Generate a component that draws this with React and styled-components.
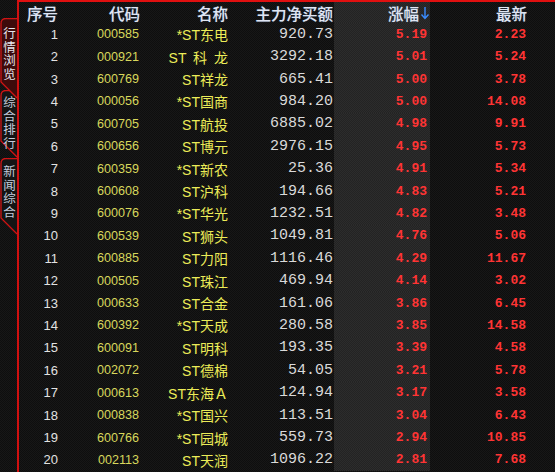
import React from "react";
import styled, { createGlobalStyle } from "styled-components";

const GlobalStyle = createGlobalStyle`
  html, body {
    margin: 0;
    padding: 0;
    background: #121212;
  }
  body {
    font-family: "Liberation Sans", "Noto Sans CJK SC", sans-serif;
  }
`;

const dots = (a, b) => `repeating-conic-gradient(${a} 0 25%, ${b} 0 50%) 0 0 / 2px 2px`;

const Screen = styled.div`
  display: flex;
  width: 555px;
  height: 472px;
  overflow: hidden;
  background: ${dots("#171717", "#0e0e0e")};
`;

const Strip = styled.div`
  display: flex;
  flex-direction: column;
  width: 17px;
  flex: none;
  padding-top: 18px;
`;

const Tab = styled.div`
  position: relative;
  height: ${(p) => p.$h}px;
  margin-top: ${(p) => p.$mt || 0}px;
  z-index: ${(p) => (p.$active ? 2 : 1)};
  display: flex;
  justify-content: center;
  padding-top: ${(p) => p.$pt}px;
  box-sizing: border-box;

  svg {
    position: absolute;
    left: 0;
    top: 0;
  }
`;

const TabText = styled.span`
  position: relative;
  writing-mode: vertical-rl;
  font-family: "Noto Sans CJK SC", sans-serif;
  font-size: 12.5px;
  line-height: 14px;
  letter-spacing: 1px;
  color: ${(p) => (p.$active ? "#e6e6ee" : "#c4ccdc")};
  margin-left: 1px;
`;

const Main = styled.div`
  flex: 1;
  border-left: 2px solid #d01010;
  border-top: 2px solid #e01010;
`;

const Row = styled.div`
  display: grid;
  grid-template-columns: 43px 81px 89px 102px 96px 1fr;
  height: ${(p) => (p.$head ? "21px" : "22.42px")};
  align-items: stretch;
`;

const Cell = styled.div`
  display: flex;
  align-items: center;
  justify-content: flex-end;
  padding-right: ${(p) => p.$pr}px;
  white-space: pre;
  background: ${(p) => (p.$hl ? dots("#2c2c2c", "#232323") : "transparent")};
`;

const HeadText = styled.span`
  font-family: "Noto Sans CJK SC", sans-serif;
  font-size: 15.5px;
  font-weight: 500;
  color: #dfe5f2;
  text-shadow: 0 0 1px rgba(120, 150, 220, 0.6);
  display: flex;
  align-items: center;
`;

const Num = styled.span`
  font-family: "Liberation Sans", sans-serif;
  font-size: 13px;
  color: #e2e2e2;
`;

const Code = styled.span`
  font-family: "Liberation Sans", sans-serif;
  font-size: 12.6px;
  color: #d8d85c;
`;

const Name = styled.span`
  font-family: "Liberation Sans", "Noto Sans CJK SC", sans-serif;
  font-size: 14px;
  color: #ecec58;
  word-spacing: 3px;
`;

const Amount = styled.span`
  font-family: "Liberation Mono", monospace;
  font-size: 15px;
  color: #dadada;
`;

const Rise = styled.span`
  font-family: "Liberation Mono", monospace;
  font-size: 13px;
  font-weight: bold;
  color: #ff3434;
`;

const rows = [
  [1, "000585", "*ST东电", "920.73", "5.19", "2.23"],
  [2, "000921", "ST 科 龙", "3292.18", "5.01", "5.24"],
  [3, "600769", "ST祥龙", "665.41", "5.00", "3.78"],
  [4, "000056", "*ST国商", "984.20", "5.00", "14.08"],
  [5, "600705", "ST航投", "6885.02", "4.98", "9.91"],
  [6, "600656", "ST博元", "2976.15", "4.95", "5.73"],
  [7, "600359", "*ST新农", "25.36", "4.91", "5.34"],
  [8, "600608", "ST沪科", "194.66", "4.83", "5.21"],
  [9, "600076", "*ST华光", "1232.51", "4.82", "3.48"],
  [10, "600539", "ST狮头", "1049.81", "4.76", "5.06"],
  [11, "600885", "ST力阳", "1116.46", "4.29", "11.67"],
  [12, "000505", "ST珠江", "469.94", "4.14", "3.02"],
  [13, "000633", "ST合金", "161.06", "3.86", "6.45"],
  [14, "600392", "*ST天成", "280.58", "3.85", "14.58"],
  [15, "600091", "ST明科", "193.35", "3.39", "4.58"],
  [16, "002072", "ST德棉", "54.05", "3.21", "5.78"],
  [17, "000613", "ST东海Ａ", "124.94", "3.17", "3.58"],
  [18, "000838", "*ST国兴", "113.51", "3.04", "6.43"],
  [19, "600766", "*ST园城", "559.73", "2.94", "10.85"],
  [20, "002113", "ST天润", "1096.22", "2.81", "7.68"],
];

const tabs = [
  { label: "行情浏览", h: 81, mt: 0, pt: 9, active: true },
  { label: "综合排行", h: 68, mt: -9, pt: 6 },
  { label: "新闻综合", h: 77, mt: 0, pt: 7 },
];

const TabShape = ({ h, active }) => (
  <svg width="17" height={h} viewBox={`0 0 17 ${h}`}>
    <path
      d={`M17 0.5 L6 0.5 Q1 0.5 1 5.5 L1 ${h - 17} L17 ${h - 1}`}
      fill={active ? "#3e0b0b" : "#141414"}
      stroke="#d01414"
      strokeWidth="1.3"
    />
  </svg>
);

const SortArrow = () => (
  <svg width="10" height="14" viewBox="0 0 10 14" style={{ marginLeft: 1 }}>
    <path d="M5 1 L5 12 M1.5 8.5 L5 12.5 L8.5 8.5" stroke="#3a8cff" strokeWidth="1.4" fill="none" />
  </svg>
);

const App = () => (
  <>
    <GlobalStyle />
    <Screen>
      <Strip>
        {tabs.map((t) => (
          <Tab key={t.label} $h={t.h} $mt={t.mt} $pt={t.pt} $active={t.active}>
            <TabShape h={t.h} active={t.active} />
            <TabText $active={t.active}>{t.label}</TabText>
          </Tab>
        ))}
      </Strip>
      <Main>
        <Row $head>
          <Cell $pr={4}><HeadText>序号</HeadText></Cell>
          <Cell $pr={3}><HeadText>代码</HeadText></Cell>
          <Cell $pr={4}><HeadText>名称</HeadText></Cell>
          <Cell $pr={1}><HeadText>主力净买额</HeadText></Cell>
          <Cell $pr={0} $hl><HeadText>涨幅<SortArrow /></HeadText></Cell>
          <Cell $pr={28}><HeadText>最新</HeadText></Cell>
        </Row>
        {rows.map(([n, code, name, amt, rise, last]) => (
          <Row key={n}>
            <Cell $pr={4}><Num>{n}</Num></Cell>
            <Cell $pr={4}><Code>{code}</Code></Cell>
            <Cell $pr={4}><Name>{name}</Name></Cell>
            <Cell $pr={1}><Amount>{amt}</Amount></Cell>
            <Cell $pr={3} $hl><Rise>{rise}</Rise></Cell>
            <Cell $pr={29}><Rise>{last}</Rise></Cell>
          </Row>
        ))}
      </Main>
    </Screen>
  </>
);

export default App;
